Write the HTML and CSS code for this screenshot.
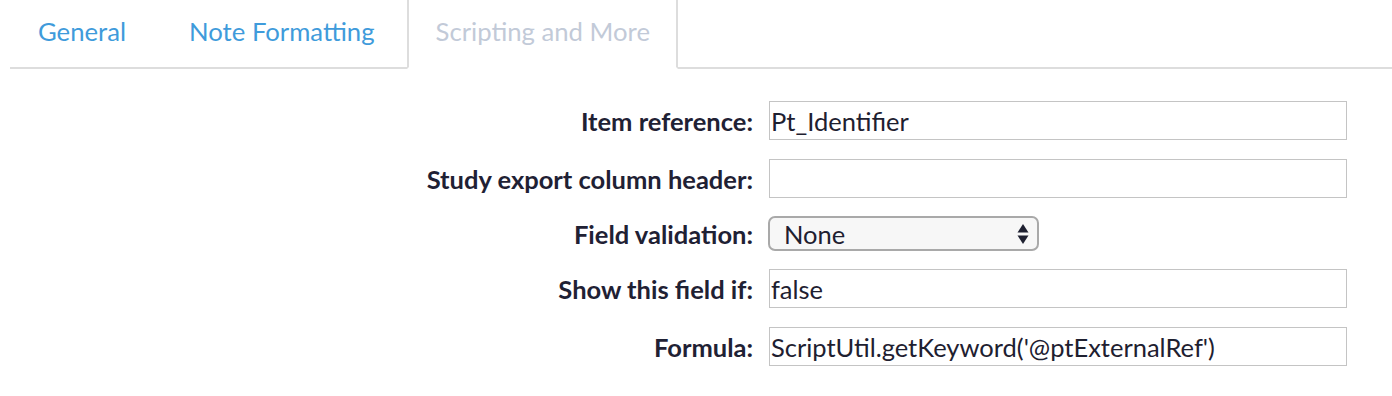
FILE: index.html
```html
<!DOCTYPE html>
<html lang="en">
<head>
    <meta charset="UTF-8">
    <title>Field Properties</title>
    <link rel="stylesheet" href="styles.css">
</head>
<body>
    <div class="tabs">
        <a class="tab" href="#">General</a>
        <a class="tab" href="#">Note Formatting</a>
        <a class="tab active" href="#">Scripting and More</a>
    </div>

    <form class="props">
        <label for="itemRef">Item reference:</label>
        <input type="text" id="itemRef" value="Pt_Identifier">

        <label for="exportHeader">Study export column header:</label>
        <input type="text" id="exportHeader">

        <label for="validation">Field validation:</label>
        <div class="select-wrap">
            <select id="validation">
                <option>None</option>
                <option>Number</option>
                <option>Date</option>
            </select>
            <svg class="arrows" width="12" height="22" viewBox="0 0 12 22">
                <path d="M6 1 L11.5 9.5 L0.5 9.5 Z" fill="#1e2030"/>
                <path d="M6 21 L11.5 12.5 L0.5 12.5 Z" fill="#1e2030"/>
            </svg>
        </div>

        <label for="showIf">Show this field if:</label>
        <input type="text" id="showIf" value="false">

        <label for="formula">Formula:</label>
        <input type="text" id="formula" value="ScriptUtil.getKeyword('@ptExternalRef')">
    </form>
</body>
</html>
```

FILE: styles.css
```css
body {
    font-family: Lato, "Open Sans", sans-serif;
    background: white;
    color: #1e2030;
    margin: 0;
}
.tabs {
    display: flex;
    margin-left: 10px;
    border-bottom: 2px solid #dddddd;
    height: 67px;
}
.tab {
    display: block;
    padding: 16px 28px 0;
    font-size: 25.7px;
    color: #3f9bdb;
    text-decoration: none;
}
.tab + .tab {
    margin-left: 7px;
}
.tab.active {
    color: #c2cad8;
    background: white;
    border: 2px solid #dddddd;
    border-bottom-color: white;
    border-top: none;
    margin-bottom: -2px;
    padding-left: 27px;
    padding-right: 26px;
    margin-left: 4px;
}
.props {
    display: grid;
    grid-template-columns: 753px 578px;
    column-gap: 16px;
    row-gap: 19px;
    align-items: center;
    margin-top: 32px;
}
.props label {
    text-align: right;
    font-weight: bold;
    font-size: 25.5px;
    color: #1f2134;
}
.props input {
    font-family: Lato, "Open Sans", sans-serif;
    font-size: 25.5px;
    color: #1e2030;
    height: 39px;
    box-sizing: border-box;
    border: 1px solid #c4c4c4;
    padding: 0 1px;
    margin: 0;
}
.select-wrap {
    position: relative;
    width: 271px;
    margin: -1px 0 -1px -1px;
}
.select-wrap select {
    display: block;
    appearance: none;
    -webkit-appearance: none;
    width: 100%;
    height: 35px;
    border: 2px solid #a9a9a9;
    border-radius: 7px;
    background: #f7f7f7;
    font-family: Lato, "Open Sans", sans-serif;
    font-size: 25.5px;
    color: #1e2030;
    padding: 0 14px;
    margin: 0;
}
.arrows {
    position: absolute;
    right: 10px;
    top: 7px;
    pointer-events: none;
}
```
